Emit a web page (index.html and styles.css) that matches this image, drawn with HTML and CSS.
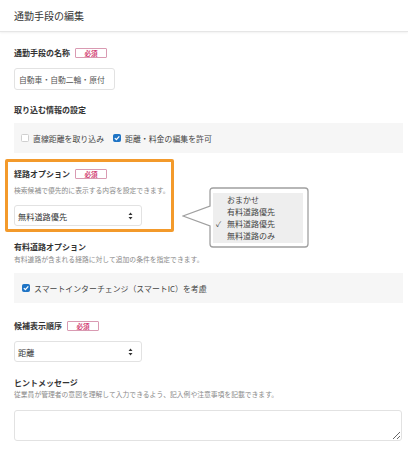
FILE: index.html
```html
<!DOCTYPE html>
<html lang="ja">
<head>
<meta charset="utf-8">
<link rel="stylesheet" href="styles.css">
</head>
<body>
<header class="hdr">通勤手段の編集</header>
<main class="form">
  <div class="label l-name">通勤手段の名称<span class="req">必須</span></div>
  <div class="input">自動車・自動二輪・原付</div>

  <div class="label l-import">取り込む情報の設定</div>
  <div class="panel">
    <span class="cb"></span><span class="cbl">直線距離を取り込み</span>
    <span class="cb on"><svg viewBox="0 0 8 8" width="8" height="8"><path d="M1.8 4.1 L3.4 5.6 L6.3 2.4" fill="none" stroke="#fff" stroke-width="1.3"/></svg></span><span class="cbl">距離・料金の編集を許可</span>
  </div>

  <div class="hilite">
    <div class="label l-route">経路オプション<span class="req">必須</span></div>
    <div class="desc d-route">検索候補で優先的に表示する内容を設定できます。</div>
    <div class="select s-route">無料道路優先<svg class="arr" viewBox="0 0 5 8" width="5" height="8"><path d="M2.5 0.5 L4.5 3 H0.5 Z M2.5 7.5 L4.5 5 H0.5 Z" fill="#333"/></svg></div>
    <div class="callout">
      <svg class="bubble" viewBox="0 0 128 62" width="128" height="62"><path d="M31 1 H123 Q126 1 126 4 V57 Q126 60 123 60 H31 Q28 60 28 57 V39 L1 29 L28 19 V4 Q28 1 31 1 Z" fill="#fff" stroke="#a0a0a0" stroke-width="1.3"/></svg>
      <ul class="menu">
        <li>おまかせ</li>
        <li>有料道路優先</li>
        <li class="sel">無料道路優先</li>
        <li>無料道路のみ</li>
      </ul>
    </div>
  </div>

  <div class="label l-toll">有料道路オプション</div>
  <div class="desc d-toll">有料道路が含まれる経路に対して追加の条件を指定できます。</div>
  <div class="panel p-toll">
    <span class="cb on"><svg viewBox="0 0 8 8" width="8" height="8"><path d="M1.8 4.1 L3.4 5.6 L6.3 2.4" fill="none" stroke="#fff" stroke-width="1.3"/></svg></span><span class="cbl">スマートインターチェンジ（スマートIC）を考慮</span>
  </div>

  <div class="label l-order">候補表示順序<span class="req">必須</span></div>
  <div class="select s-order">距離<svg class="arr" viewBox="0 0 5 8" width="5" height="8"><path d="M2.5 0.5 L4.5 3 H0.5 Z M2.5 7.5 L4.5 5 H0.5 Z" fill="#333"/></svg></div>

  <div class="label l-hint">ヒントメッセージ</div>
  <div class="desc d-hint">従業員が管理者の意図を理解して入力できるよう、記入例や注意事項を記載できます。</div>
  <textarea class="ta"></textarea>
</main>
</body>
</html>
```

FILE: styles.css
```css
* { box-sizing: border-box; }
html, body { margin: 0; padding: 0; background: #fff; }
body {
  font-family: "Noto Sans CJK JP", "Noto Sans", sans-serif;
  color: #333;
  width: 408px;
  overflow: hidden;
}
.hdr {
  height: 32px;
  display: flex;
  align-items: center;
  padding-left: 14px;
  font-size: 10px;
  color: #333;
  border-bottom: 1px solid #e6e6e6;
  box-shadow: 0 1px 2px rgba(0,0,0,0.06);
}
.form {
  padding: 0 6px 0 14px;
}
.label {
  display: flex;
  align-items: center;
  height: 12px;
  line-height: 12px;
  font-size: 8px;
  font-weight: 700;
  color: #333;
}
.req {
  display: inline-flex;
  align-items: center;
  justify-content: center;
  margin-left: 5px;
  width: 32px;
  height: 10px;
  border: 1px solid #d99ab2;
  color: #d23f74;
  font-size: 6.6px;
  font-weight: 700;
  border-radius: 1px;
}
.desc {
  font-size: 6.8px;
  line-height: 10px;
  color: #8a8a8a;
  white-space: nowrap;
}
.input {
  margin-top: 9px;
  width: 101px;
  height: 22px;
  border: 1px solid #e2e2e2;
  border-radius: 3px;
  padding-left: 4px;
  display: flex;
  align-items: center;
  font-size: 7.8px;
  color: #555;
  white-space: nowrap;
}
.l-name { margin-top: 15px; }
.l-import { margin-top: 14px; }
.panel {
  margin-top: 7px;
  height: 30px;
  background: #f6f6f6;
  display: flex;
  align-items: center;
  padding-left: 7px;
  margin-right: -1px;
}
.cb {
  width: 8px;
  height: 8px;
  border: 1px solid #cfcfcf;
  border-radius: 1.5px;
  background: #fff;
  flex: none;
  display: flex;
}
.cb.on {
  background: #1f74c5;
  border-color: #1f74c5;
  margin-left: 9px;
}
.cb.on svg { margin: -1px; }
.panel .cbl {
  margin-left: 4px;
  font-size: 7.9px;
  color: #444;
  white-space: nowrap;
}
.p-toll .cb.on { margin-left: 1px; }
.p-toll { margin-top: 9px; }
.p-toll .cbl { margin-left: 4px; }

.hilite {
  position: relative;
  margin-top: 6px;
  margin-left: -9px;
  width: 169px;
  border: 3px solid #f39a2b;
  border-radius: 2px;
  padding: 6px 0 3px 6px;
}
.d-route { margin-top: 5px; }
.select {
  position: relative;
  width: 128px;
  height: 21px;
  border: 1px solid #e2e2e2;
  border-radius: 3px;
  padding-left: 3px;
  display: flex;
  align-items: center;
  font-size: 8.2px;
  color: #333;
  background: #fff;
}
.select .arr {
  position: absolute;
  right: 8px;
  top: 6px;
}
.s-route { margin-top: 10px; }
.callout {
  position: absolute;
  left: 174px;
  top: 25px;
  width: 128px;
  height: 62px;
}
.bubble { position: absolute; left: 0; top: 0; }
.menu {
  position: absolute;
  left: 31px;
  top: 6px;
  width: 90px;
  height: 50px;
  margin: 0;
  padding: 0;
  list-style: none;
  background: #eeeeee;
}
.menu li {
  position: relative;
  height: 12.3px;
  line-height: 12.3px;
  padding-left: 14px;
  font-size: 8px;
  color: #444;
  white-space: nowrap;
}
.menu li:first-child { margin-top: 0.5px; }
.menu li.sel::before {
  content: "✓";
  position: absolute;
  left: 3px;
  top: 0;
  font-size: 7.5px;
  color: #444;
}
.l-toll { margin-top: 9px; }
.d-toll { margin-top: 1px; }
.l-order { margin-top: 17px; }
.s-order { margin-top: 9px; }
.l-hint { margin-top: 15px; }
.d-hint { margin-top: 0; }
.ta {
  display: block;
  margin-top: 11px;
  width: 388px;
  height: 31px;
  border: 1px solid #e2e2e2;
  border-radius: 3px;
  font-family: inherit;
  resize: vertical;
  background: #fff;
}
```
